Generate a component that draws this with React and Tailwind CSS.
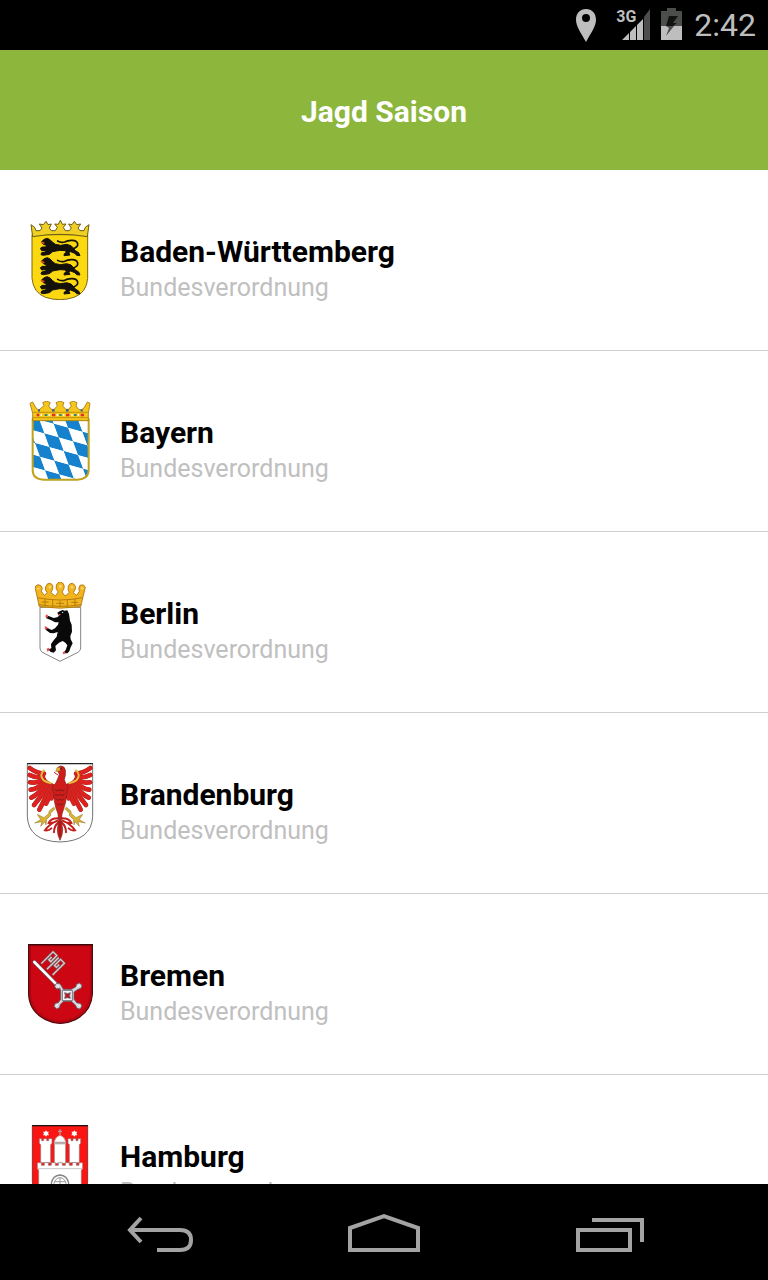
function Lion({ y }) {
  return (
    <g transform={`translate(62 ${y})`}>
      <path
        fill="#14110a"
        stroke="#14110a"
        strokeWidth="3"
        strokeLinejoin="round"
        d="M2 12 L10 4 L20 1 L28 5 L36 13 L44 19 L60 22 L78 19 L91 23 L98 30 L104 38 L114 44 L118 53 L108 52 L102 46 L90 41 L84 44 L88 51 L70 53 L71 47 L77 43 L74 38 L58 37 L46 39 L36 41 L26 49 L8 52 L1 50 L3 44 L13 42 L18 37 L3 38 L-1 31 L5 27 L16 27 L17 22 L8 19 Z"
      />
      <path fill="none" stroke="#14110a" strokeWidth="5" strokeLinecap="round" d="M98 32 Q113 27 111 17 Q108 6 92 7 Q80 8 72 12 Q60 15 51 9" />
      <path stroke="#e8501c" strokeWidth="5" d="M1 12 L11 16" />
    </g>
  );
}

function BadenCrest() {
  return (
    <svg viewBox="0 30 240 240" className="size-20" aria-hidden="true">
      <path
        fill="#fbd80f"
        stroke="#7b6814"
        strokeWidth="3"
        d="M36 74 V205 Q40 248 76 262 Q120 276 162 262 Q200 248 203 205 V74 Z"
      />
      <path
        fill="#efcf24"
        stroke="#6c5b16"
        strokeWidth="3"
        strokeLinejoin="round"
        d="M38 80 L33 44 L44 52 L48 62 L60 62 L66 54 L58 42 L70 44 L78 34 L84 44 L94 42 L88 54 L94 62 L106 62 L112 52 L104 42 L115 43 L121 31 L127 43 L138 42 L130 52 L136 62 L148 62 L154 54 L146 42 L156 44 L163 34 L170 44 L182 42 L174 54 L180 62 L192 62 L196 52 L207 44 L202 80 Q120 66 38 80 Z"
      />
      <Lion y={84} />
      <Lion y={142} />
      <Lion y={199} />
    </svg>
  );
}

function BayernCrest() {
  return (
    <svg viewBox="0 33 240 240" className="size-20" aria-hidden="true">
      {/* skewed two by two checkerboard */}
      <pattern
        id="bayern-lozenges"
        width="2"
        height="2"
        patternUnits="userSpaceOnUse"
        patternTransform="matrix(43 12 15 41 101 101)"
      >
        <path fill="#fff" d="M0 0 H2 V2 H0 Z" />
        <path fill="#1682cd" d="M0 0 H1 V1 H0 Z M1 1 H2 V2 H1 Z" />
      </pattern>
      <path
        fill="url(#bayern-lozenges)"
        stroke="#c0a21c"
        strokeWidth="6"
        d="M38 88 V240 Q38 267 70 269 H172 Q206 267 206 240 V88 Z"
      />
      <path
        fill="#f5c61b"
        stroke="#a2770c"
        strokeWidth="2.5"
        strokeLinejoin="round"
        d="M38 92 V70 L30 40 L38 36 L48 54 L56 60 L64 54 L72 46 L68 38 L80 33 L91 38 L86 48 L94 58 L102 58 L112 48 L108 38 L120 33 L132 38 L128 48 L138 58 L146 58 L154 48 L149 38 L160 33 L171 38 L168 48 L176 58 L184 60 L192 54 L202 36 L210 40 L205 70 V92 Z"
      />
      <path stroke="#a7780c" strokeWidth="2" d="M38 67 H205 M38 83 H205" />
      <path stroke="#df3122" strokeWidth="7" d="M50 75 h8 M96 75 h10 M138 75 h10 M182 75 h10" />
      <path stroke="#2d8c74" strokeWidth="6" d="M74 75 h8 M118 75 h7 M162 75 h8" />
      <path stroke="#35628f" strokeWidth="7" d="M54 61 h6 M96 61 h8 M138 61 h8 M182 61 h6" />
      <path stroke="#fff" strokeWidth="4" d="M64 72 v6 M88 72 v6 M112 72 v6 M131 72 v6 M156 72 v6 M175 72 v6" />
    </svg>
  );
}

function BerlinCrest() {
  return (
    <svg viewBox="0 30 240 240" className="size-20" aria-hidden="true">
      <path
        fill="#fff"
        stroke="#858585"
        strokeWidth="3"
        d="M60 106 H182 V228 Q182 236 174 241 L120 268 L67 241 Q60 236 60 228 Z"
      />
      <g fill="#f2b51d" stroke="#a8710d" strokeWidth="2.5" strokeLinejoin="round">
        <path d="M58 104 L46 50 Q44 40 54 38 Q65 38 67 49 L64 58 L73 70 L82 62 Q73 54 77 44 Q81 32 91 34 Q101 38 98 51 L93 62 L106 72 L115 60 Q105 51 109 39 Q113 30 121 30 Q132 32 133 43 Q132 54 126 60 L135 72 L148 62 Q142 54 145 42 Q149 33 157 34 Q168 38 166 51 L160 62 L170 70 L178 58 Q174 47 180 40 Q191 35 196 45 L194 54 L182 104 Q120 113 58 104 Z" />
        <path fill="none" d="M52 77 Q120 91 188 77 M56 98 Q120 108 184 98 M75 81 V101 M98 84 V104 M120 86 V105 M142 84 V104 M165 81 V101 M65 90 H86 M109 94 H132 M154 91 H174" />
      </g>
      <path fill="#f8d77a" d="M51 47 h8 v5 h-8z M86 42 h7 v7 h-7z M117 39 h8 v8 h-8z M152 42 h8 v7 h-8z M183 46 h7 v6 h-7z" />
      <path
        fill="#090909"
        d="M112 122 L120 117 L128 114 L134 116 L142 115 L147 126 L150 146 L155 158 L156 179 L151 192 L152 202 L158 214 L152 226 L148 238 L142 244 L130 244 L137 234 L142 220 L136 212 L128 207 L117 212 L106 222 L108 235 L101 242 L91 239 L85 232 L94 229 L93 216 L101 205 L110 194 L113 180 L101 184 L90 183 L78 174 L76 165 L84 169 L95 174 L105 169 L114 158 L116 151 L105 151 L94 145 L79 139 L77 132 L86 132 L101 138 L111 136 L117 132 Z"
      />
      <path fill="#e74b55" d="M77 128 h6 l2 8 -7 1z M74 163 l8 2 1 6 -8 2z M80 230 l6 -3 3 7 -7 5z M128 241 l6 -3 3 5 -7 4z M114 126 l9 0 -4 5z" />
      <circle cx="128" cy="121" r="2" fill="#fff" />
    </svg>
  );
}

const feathers = [
  "M72 62 Q48 60 29 45",
  "M69 72 Q48 76 29 66",
  "M72 80 Q50 92 30 88",
  "M76 86 Q52 108 32 110",
  "M82 90 Q56 124 34 134",
  "M88 94 Q64 130 42 156",
  "M94 97 Q74 140 58 170",
  "M98 100 Q88 134 78 152",
  "M102 106 Q98 124 94 136",
];

function BrandenburgWing() {
  return (
    <g fill="none" strokeLinecap="round">
      {feathers.map((d) => (
        <g key={d}>
          <path stroke="#9b2f28" strokeWidth="14" d={d} />
          <path stroke="#dc211e" strokeWidth="12" d={d} />
        </g>
      ))}
      <path stroke="#e4bc3c" strokeWidth="6" d="M72 52 Q56 66 71 82 Q80 88 92 90" />
      <path fill="#d9b437" stroke="#8a6d1d" strokeWidth="1.5" d="M105 168 L92 180 L92 188 L80 199 L78 216 L75 206 L62 220 L66 206 L44 210 L62 200 L52 184 L72 194 L86 182 L87 175 L100 163 Z" />
      <path stroke="#c3211d" strokeWidth="6" d="M114 196 Q92 196 86 210 Q98 212 114 202 Q88 212 75 232 Q86 234 94 226 M116 208 Q102 218 102 238" />
    </g>
  );
}

function BrandenburgCrest() {
  return (
    <svg viewBox="0 30 240 240" className="size-20" aria-hidden="true">
      <path fill="#fff" stroke="#555" strokeWidth="2.5" d="M22 32 H218 V190 Q215 264 120 267 Q25 264 22 190 Z" />
      <path stroke="#111" strokeWidth="3" d="M21 32 H219" />
      <BrandenburgWing />
      <g transform="translate(240 0) scale(-1 1)">
        <BrandenburgWing />
      </g>
      <path
        fill="#cf1d1b"
        stroke="#78201b"
        strokeWidth="2"
        d="M112 52 Q112 40 122 39 Q134 39 136 51 Q138 66 133 80 Q135 90 144 100 Q142 112 140 128 Q138 148 132 164 L126 183 L124 202 L128 230 L126 246 L120 262 L114 246 L112 230 L116 202 L114 183 L107 162 Q101 142 101 122 L97 101 Q109 91 113 78 L118 64 Z"
      />
      <path fill="none" stroke="#761c18" strokeWidth="3" d="M105 110 q7 8 14 0 q7 8 14 0 M105 124 q7 8 14 0 q7 8 14 0 M107 138 q6 8 12 0 q6 8 12 0 M110 152 q5 8 10 0 q5 8 10 0 M120 204 V250" />
      <path fill="#e2b62d" stroke="#8c681b" strokeWidth="1.5" d="M120 43 L111 44 L107 56 L112 54 L120 54 Z" />
      <path stroke="#cf1d1b" strokeWidth="3" d="M114 66 L102 58" />
      <circle cx="124" cy="47" r="2" fill="#222" />
    </svg>
  );
}

function BremenCrest() {
  const bit = "M0 4 H50 V20 H24 V12 H36 M0 28 H50 M0 52 H50 V36 H24 V44 H36";
  return (
    <svg viewBox="0 30 240 240" className="size-20" aria-hidden="true">
      <path fill="#cc0612" stroke="#520a0e" strokeWidth="4" d="M26 32 H217 V180 Q214 232 166 257 Q120 279 77 257 Q28 232 26 180 Z" />
      <path fill="none" stroke="#8e0911" strokeWidth="2" d="M31 36 H212 V180 Q208 228 163 252 Q120 272 80 252 Q34 228 31 180 Z" />
      <path stroke="#3d080b" strokeWidth="4" d="M24 32 H219" />
      <g fill="none" transform="translate(61 86) rotate(-45)">
        <path stroke="#755257" strokeWidth="8" d={bit} />
        <path stroke="#e3c9cc" strokeWidth="4" d={bit} />
      </g>
      <path stroke="#684b50" strokeWidth="12" strokeLinecap="round" d="M43 84 L119 161" />
      <path stroke="#fff" strokeWidth="8" strokeLinecap="round" d="M43 84 L119 161" />
      <g fill="#d8d8df" stroke="#625b64" strokeWidth="2.5">
        <path d="M120 162 L110 165 L104 158 L108 149 L117 148 L123 154 L130 166 L154 166 L168 158 L169 151 L178 147 L186 154 L183 163 L174 166 L162 174 V196 L171 207 L181 208 L186 216 L180 225 L171 223 L166 213 L154 202 L131 202 L121 211 L118 221 L110 225 L102 217 L106 208 L115 206 L122 196 V174 Z" />
        <path fill="#f5f5f7" d="M127 169 H157 V200 H127 Z" />
        <path fill="#bc1521" d="M134 176 Q143 181 151 176 Q147 185 151 193 Q143 189 134 193 Q138 185 134 176 Z" />
      </g>
      <path stroke="#fff" strokeWidth="3" d="M110 153 L117 160 M179 152 L171 160 M108 216 L114 211 M179 217 L173 212" />
    </svg>
  );
}

function HamburgCrest() {
  return (
    <svg viewBox="0 45 240 240" className="size-20" aria-hidden="true">
      <path fill="#fb1513" stroke="#5d1715" strokeWidth="2" d="M37 47 H203 V215 Q200 268 120 283 Q40 268 37 215 Z" />
      <path stroke="#211" strokeWidth="4" d="M36 47 H204" />
      <g fill="#fff" stroke="#8e7777" strokeWidth="2">
        <path d="M58 86 h7 v6 h6 v-6 h9 v6 h6 v-6 h10 v14 l-4 4 v54 H62 v-54 l-4 -4z" />
        <path d="M144 86 h9 v6 h6 v-6 h9 v6 h6 v-6 h8 v14 l-4 4 v54 H148 v-54 l-4 -4z" />
        <path d="M103 94 Q106 80 120 76 Q134 80 137 94 V160 H103 Z" />
        <path d="M52 158 h12 v8 h9 v-8 h12 v8 h9 v-8 h12 v8 h9 v-8 h12 v8 h9 v-8 h12 v8 h9 v-8 h12 v8 h8 v-8 h11 v18 l-4 5 v70 H56 v-70 l-4 -5z" />
      </g>
      <path stroke="#b7aaaa" strokeWidth="8" d="M102 99 H138" />
      <path stroke="#aaa" strokeWidth="2" d="M54 176 H188" />
      <path fill="#fff" d="M78 61 L81 65 L87 65 L84 70 L87 76 L81 76 L78 80 L75 76 L69 76 L72 70 L69 65 L75 65 Z M163 61 L166 65 L172 65 L169 70 L172 76 L166 76 L163 80 L160 76 L154 76 L157 70 L154 65 L160 65 Z" />
      <path stroke="#b99" strokeWidth="4" d="M120 58 V77 M114 64 H126" />
      <path fill="#fff" stroke="#86868c" strokeWidth="4" d="M94 240 V220 Q98 197 120 195 Q142 197 146 220 V240 Z" />
      <path fill="none" stroke="#999" strokeWidth="3" d="M102 240 V220 Q106 204 120 203 Q134 204 138 220 V240 M120 203 V240 M104 215 H136" />
    </svg>
  );
}

const states = [
  { name: "Baden-Württemberg", Crest: BadenCrest },
  { name: "Bayern", Crest: BayernCrest },
  { name: "Berlin", Crest: BerlinCrest },
  { name: "Brandenburg", Crest: BrandenburgCrest },
  { name: "Bremen", Crest: BremenCrest },
  { name: "Hamburg", Crest: HamburgCrest },
];

function StatusBar() {
  return (
    <div className="h-[50px] shrink-0 bg-black text-[#bebebe] flex items-center justify-end pr-3">
      <svg viewBox="0 0 24 36" className="w-6 h-9 mr-5" fill="#bebebe" aria-hidden="true">
        <path fillRule="evenodd" d="M12 2 C6 2 2 6 2 13 C2 19 7 26 12 35 C17 26 22 19 22 13 C22 6 18 2 12 2 Z M12 7 a4 4 0 1 1 0 8 a4 4 0 0 1 0 -8 Z" />
      </svg>
      <div className="relative w-8 h-9 mr-[10px]">
        <svg viewBox="0 0 32 36" className="w-8 h-9" aria-hidden="true">
          <path fill="#bebebe" d="M4 33 L11 26 V33 Z M12 25 L18 19 V33 H12 Z M19 18 L25 12 V33 H19 Z" />
          <path fill="#4b4e4a" d="M26 10 L32 2 V33 H26 Z" />
        </svg>
        <span className="absolute -left-0.5 top-0 text-base leading-5 font-bold">3G</span>
      </div>
      <svg viewBox="0 0 22 36" className="w-[22px] h-9 mr-3" aria-hidden="true">
        <path fill="#4b4e4a" d="M7 1 H16 V4 H22 V19 H1 V4 H7 Z" />
        <path fill="#bebebe" d="M1 19 H22 V33 H1 Z" />
        <path fill="#111310" d="M9 9 L18 9 L13 16 H17 L13 19 H6 Z" />
        <path fill="#4b4e4a" d="M6 19 H14 L6 29 L9 21 Z" />
      </svg>
      <span className="text-[32px] leading-10">2:42</span>
    </div>
  );
}

function NavBar() {
  return (
    <nav className="h-24 shrink-0 bg-black flex items-center justify-between px-30">
      <button type="button" aria-label="Zurück">
        <svg viewBox="0 0 80 44" className="w-20 h-11" fill="none" stroke="#a3a3a3" strokeWidth="4" aria-hidden="true">
          <path d="M21 8 L10 20 L21 32 M9 20 H60 Q71 20 71 30 Q71 40 60 40 H37" />
        </svg>
      </button>
      <button type="button" aria-label="Startseite">
        <svg viewBox="0 0 80 44" className="w-20 h-11" fill="none" stroke="#a3a3a3" strokeWidth="4" aria-hidden="true">
          <path d="M6 40 V18 L40 6 L74 18 V40 Z" />
        </svg>
      </button>
      <button type="button" aria-label="Letzte Apps">
        <svg viewBox="0 0 80 44" className="w-20 h-11" fill="none" stroke="#a3a3a3" strokeWidth="4" aria-hidden="true">
          <path d="M10 20 H62 V40 H10 Z M24 10 H74 V32" />
        </svg>
      </button>
    </nav>
  );
}

export default function App() {
  return (
    <div className="h-screen flex flex-col bg-white font-['Roboto',sans-serif]">
      <StatusBar />
      <header className="h-[120px] shrink-0 bg-[#8cb63c] flex items-center justify-center pt-1">
        <h1 className="text-[30px] leading-9 font-bold text-white">Jagd Saison</h1>
      </header>
      <main className="flex-1 min-h-0 overflow-y-auto [scrollbar-width:none]">
        <ul>
          {states.map(({ name, Crest }) => (
            <li key={name} className="border-b border-[#cfcfcf]">
              <button type="button" className="w-full h-[180px] flex items-center gap-5 px-5 text-left">
                <Crest />
                <span className="flex flex-col pt-5">
                  <span className="text-[30px] leading-9 font-bold text-black">{name}</span>
                  <span className="text-[25px] leading-9 text-[#c0c0c0]">Bundesverordnung</span>
                </span>
              </button>
            </li>
          ))}
        </ul>
      </main>
      <NavBar />
    </div>
  );
}
